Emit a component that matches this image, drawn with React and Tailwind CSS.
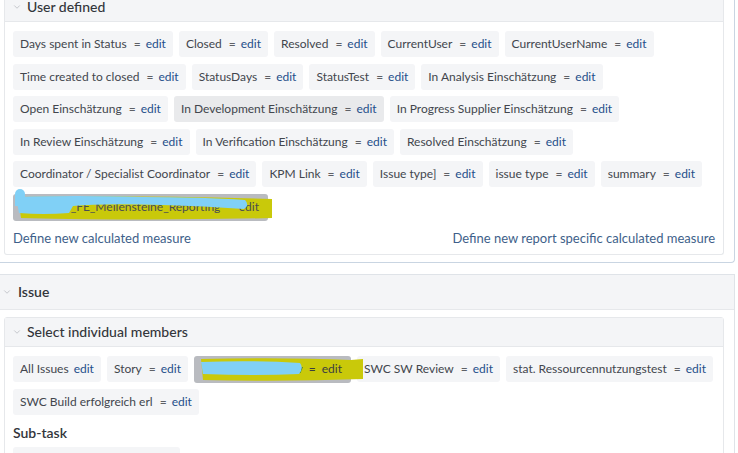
import { ChevronDown } from "lucide-react";

const userDefined = [
  "Days spent in Status",
  "Closed",
  "Resolved",
  "CurrentUser",
  "CurrentUserName",
  "Time created to closed",
  "StatusDays",
  "StatusTest",
  "In Analysis Einschätzung",
  "Open Einschätzung",
  { label: "In Development Einschätzung", hover: true },
  "In Progress Supplier Einschätzung",
  "In Review Einschätzung",
  "In Verification Einschätzung",
  "Resolved Einschätzung",
  "Coordinator / Specialist Coordinator",
  "KPM Link",
  "Issue type]",
  "issue type",
  "summary",
];

function Chip({ label, hover, noEquals }) {
  return (
    <span
      className={`inline-flex items-center h-[26px] px-[7px] rounded-[3px] whitespace-nowrap ${
        hover ? "bg-[#e9eaec]" : "bg-[#f4f5f7]"
      }`}
    >
      <span className="text-[#42464d]">{label}</span>
      {noEquals ? (
        <span className="w-[5px]" />
      ) : (
        <span className="ml-[7px] mr-[5px] text-[#5e6066]">=</span>
      )}
      <a className="text-[#1f4f8a] cursor-pointer">edit</a>
    </span>
  );
}

function PanelHeader({ title, className = "" }) {
  return (
    <div
      className={`flex items-center gap-[5px] bg-[#f4f5f7] border-b border-[#e6e8eb] pl-[7px] ${className}`}
    >
      <ChevronDown size={10} strokeWidth={1.5} className="text-[#a8abb2]" />
      <span className="text-[14px] text-[#33363b] font-medium">{title}</span>
    </div>
  );
}

// scribbled-over chip from the screenshot (highlighter + blue pen on top)
function MarkedChip({ width, children, variant }) {
  return (
    <span
      className="relative inline-flex items-center h-[27px] px-[7px] rounded-[3px] bg-[#b9bbc0] whitespace-nowrap"
      style={{ width }}
    >
      {variant === "a" ? (
        <>
          <svg className="absolute left-0 top-0 overflow-visible" width="262" height="27" viewBox="0 0 262 27">
            <path d="M5 3 Q120 1 259 5 L259 24 Q140 27 8 24 Z" fill="#c9c90a" />
          </svg>
          <span className="relative text-[#4a4d52] flex-1 text-right pr-[2px]">{children}</span>
          <svg className="absolute left-0 top-0 overflow-visible" width="262" height="27" viewBox="0 0 262 27">
            <path
              d="M3 3 Q60 1 130 3 Q190 3 232 6 Q237 11 231 15 Q190 12 150 11 Q90 9 60 12 L56 19 Q30 21 6 19 Z"
              fill="#80d0f6"
            />
            <circle cx="7" cy="0" r="5" fill="#80d0f6" />
            <rect x="2" y="0" width="10" height="12" fill="#80d0f6" />
          </svg>
        </>
      ) : (
        <>
          <svg className="absolute left-0 top-0 overflow-visible" width="172" height="27" viewBox="0 0 172 27">
            <path d="M7 3 Q90 1 157 4 L169 3 L169 23 Q90 26 9 24 Z" fill="#c9c90a" />
          </svg>
          <span className="relative text-[#3a3d42] flex-1 text-right pr-[2px]">{children}</span>
          <svg className="absolute left-0 top-0 overflow-visible" width="172" height="27" viewBox="0 0 172 27">
            <path d="M7 6 Q60 4 106 7 Q110 12 105 18 Q60 20 9 18 Z" fill="#80d0f6" />
          </svg>
        </>
      )}
    </span>
  );
}

export default function App() {
  return (
    <div
      className="w-[738px] h-[453px] overflow-hidden bg-white text-[12px] leading-none"
      style={{ fontFamily: "Lato, 'Open Sans', sans-serif" }}
    >
      {/* outer measures box */}
      <div className="w-[735px] mt-[-7px] pl-[4px] pr-[10px] pb-[7px] border-r border-b border-[#c9d5e2] rounded-br-[4px]">
        <div className="border border-t-0 border-[#e6e8eb] rounded-b-[3px] bg-white">
          <PanelHeader title="User defined" className="h-[29px]" />
          <div className="px-[8px] pt-[9px] pb-[9px]">
            <div className="flex flex-wrap gap-x-[6px] gap-y-[6.5px]">
              {userDefined.map((c, i) =>
                typeof c === "string" ? (
                  <Chip key={i} label={c} />
                ) : (
                  <Chip key={i} label={c.label} hover={c.hover} />
                )
              )}
              <MarkedChip width={255} variant="a">
                _FE_Meilensteine_Reporting&nbsp;&nbsp;&nbsp;&nbsp;&nbsp;&nbsp;edit
              </MarkedChip>
            </div>
            <div className="flex justify-between mt-[11px] text-[13px] text-[#3e5f8a]">
              <a className="cursor-pointer">Define new calculated measure</a>
              <a className="cursor-pointer">Define new report specific calculated measure</a>
            </div>
          </div>
        </div>
      </div>

      {/* Issue dimension */}
      <div className="w-[735px] mt-[11px] border-t border-r border-[#dfe3e8]">
        <div className="flex items-center gap-[6px] h-[35px] bg-[#f4f5f7] border-b border-[#e6e8eb] pl-[2px]">
          <ChevronDown size={10} strokeWidth={1.5} className="text-[#a8abb2]" />
          <span className="text-[14px] text-[#33363b] font-semibold">Issue</span>
        </div>
        <div className="pl-[4px] pr-[10px] pt-[7px]">
          <div className="border border-[#e6e8eb] rounded-[3px]">
            <PanelHeader title="Select individual members" className="h-[29px]" />
            <div className="px-[8px] pt-[9px]">
              <div className="flex flex-wrap gap-x-[6px] gap-y-[6px]">
                <Chip label="All Issues" noEquals />
                <Chip label="Story" />
                <MarkedChip width={157} variant="b">
                  v&nbsp;&nbsp;=&nbsp;&nbsp;edit
                </MarkedChip>
                <Chip label="SWC SW Review" />
                <Chip label="stat. Ressourcennutzungstest" />
                <Chip label="SWC Build erfolgreich erl" />
              </div>
              <div className="mt-[11px] text-[14px] font-semibold text-[#33363b]">Sub-task</div>
              <div className="mt-[7px] w-[167px] h-[26px] rounded-[3px] bg-[#f4f5f7]" />
            </div>
          </div>
        </div>
      </div>
    </div>
  );
}
